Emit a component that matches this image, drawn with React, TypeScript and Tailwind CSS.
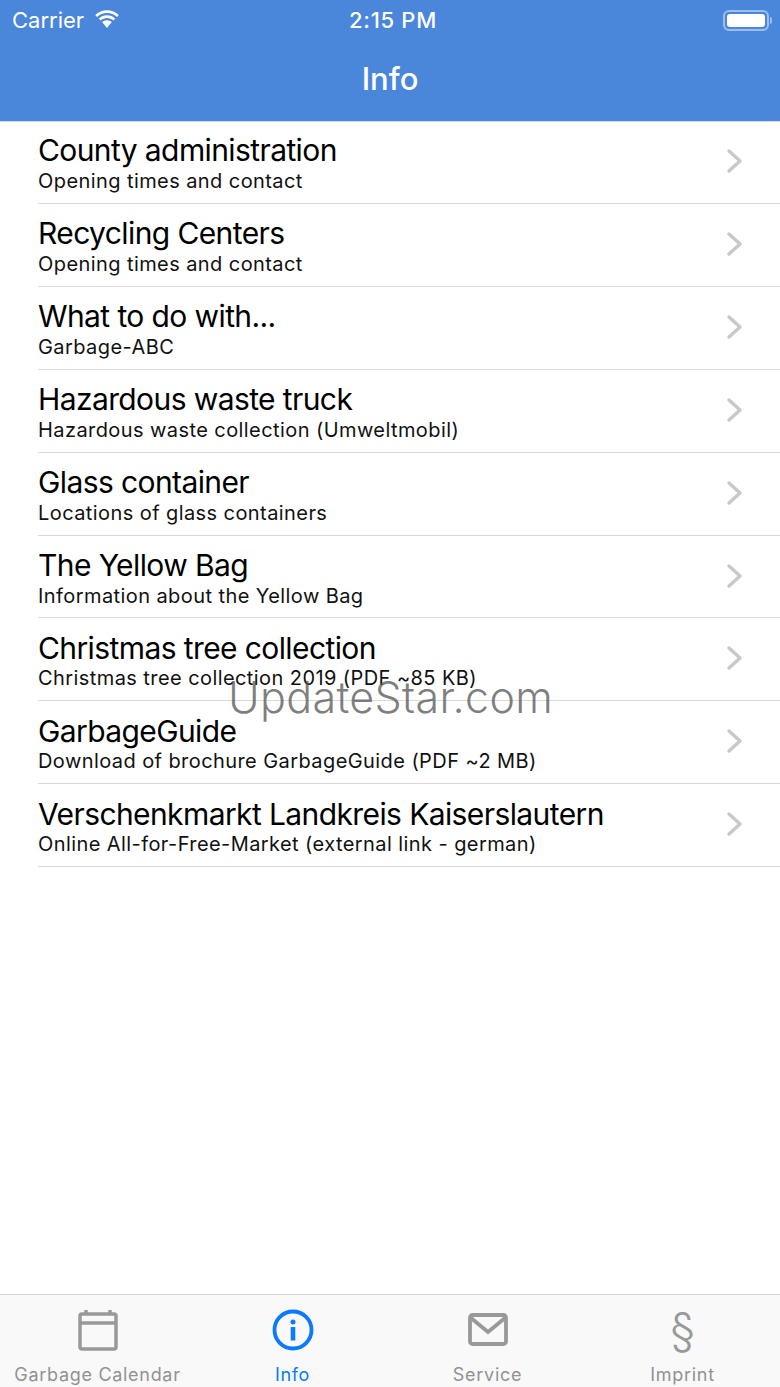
import React from "react";

const rows: [string, string][] = [
  ["County administration", "Opening times and contact"],
  ["Recycling Centers", "Opening times and contact"],
  ["What to do with...", "Garbage-ABC"],
  ["Hazardous waste truck", "Hazardous waste collection (Umweltmobil)"],
  ["Glass container", "Locations of glass containers"],
  ["The Yellow Bag", "Information about the Yellow Bag"],
  ["Christmas tree collection", "Christmas tree collection 2019 (PDF ~85 KB)"],
  ["GarbageGuide", "Download of brochure GarbageGuide (PDF ~2 MB)"],
  ["Verschenkmarkt Landkreis Kaiserslautern", "Online All-for-Free-Market (external link - german)"],
];

function Row({ title, sub }: { title: string; sub: string }) {
  return (
    <div className="h-[82.92px] pl-[38px]">
      <div className="relative h-[82.92px] border-b border-[#d9d9d9]">
        <div className="pt-[11.4px] text-[30px] leading-[36px] tracking-[-0.6px] text-black">{title}</div>
        <div className="mt-[0.6px] text-[20px] leading-[24px] tracking-[0.42px] text-[#111]">{sub}</div>
        <svg className="absolute right-[36px] top-[27px]" width="18" height="26" viewBox="0 0 18 26" fill="none">
          <path d="M3 3 L14 13 L3 23" stroke="#c7c7cc" strokeWidth="3.400" strokeLinecap="round" strokeLinejoin="round" />
        </svg>
      </div>
    </div>
  );
}

function Tab({ label, active, children }: { label: string; active?: boolean; children: React.ReactNode }) {
  return (
    <div className="flex flex-1 flex-col items-center">
      <div className="flex h-[46px] w-full items-center justify-center">{children}</div>
      <div className={`mt-[11px] text-[18px] leading-[22px] tracking-[0.7px] ${active ? "text-[#0a7aff]" : "text-[#929292]"}`}>{label}</div>
    </div>
  );
}

export default function App() {
  return (
    <div className="relative flex h-[1387px] w-[780px] flex-col overflow-hidden bg-white font-['Inter','Liberation_Sans',sans-serif]">
      <header className="relative h-[121px] shrink-0 bg-[#4a86da] text-white shadow-[0_1px_0_#dcdcdc]">
        <div className="relative flex h-[40px] items-center justify-between pl-[12px] pr-[8px]">
          <div className="flex items-center gap-[10px]">
            <span className="text-[22px] leading-[26px]">Carrier</span>
            <svg width="26" height="20" viewBox="0 0 26 20" fill="white">
              <path d="M13 3c3.900 0 7.300 1.500 10 4l1.800-2C21.600 2 17.500.2 13 .2S4.400 2 1.200 5L3 7c2.700-2.500 6.100-4 10-4z" />
              <path d="M13 8c2.500 0 4.700 1 6.400 2.500l1.900-2C19.100 6.400 16.200 5.200 13 5.200S6.900 6.400 4.700 8.500l1.900 2C8.300 9 10.500 8 13 8z" />
              <path d="M13 10.200c-1.900 0-3.500.7-4.800 1.900L13 18l4.800-5.900c-1.300-1.200-2.900-1.900-4.800-1.900z" />
            </svg>
          </div>
          <span className="absolute left-[349px] text-[22px] font-medium leading-[26px] tracking-[0.7px]">2:15 PM</span>
          <div className="flex items-center gap-[1px]">
            <div className="h-[21px] w-[46px] rounded-[6px] border-2 border-[#9dbdec] p-[2px]">
              <div className="h-full w-full rounded-[3px] bg-white" />
            </div>
            <div className="h-[7px] w-[2px] rounded-r-[2px] bg-[#9dbdec]" />
          </div>
        </div>
        <div className="flex h-[80px] items-center justify-center pb-[2px] text-[31px] font-medium leading-[36px]">Info</div>
      </header>

      <main className="flex-1">
        {rows.map(([t, s]) => (
          <Row key={t} title={t} sub={s} />
        ))}
      </main>

      <footer className="flex h-[93px] shrink-0 border-t border-[#d4d4d4] bg-[#f9f9f9] pt-[12px]">
        <Tab label="Garbage Calendar">
          <svg width="40" height="42" viewBox="0 0 40 42" fill="none" stroke="#999999" strokeWidth="3.500">
            <rect x="2" y="5" width="36" height="35" rx="2" />
            <path d="M2 14 H38" />
            <path d="M8 1 V5 M32 1 V5" />
          </svg>
        </Tab>
        <Tab label="Info" active>
          <svg width="42" height="42" viewBox="0 0 42 42" fill="none">
            <circle cx="21" cy="21" r="18.500" stroke="#0a7aff" strokeWidth="3.800" />
            <circle cx="21" cy="13" r="2.500" fill="#0a7aff" />
            <rect x="18.700" y="18" width="4.600" height="13.500" fill="#0a7aff" />
          </svg>
        </Tab>
        <Tab label="Service">
          <svg width="40" height="34" viewBox="0 0 40 34" fill="none" stroke="#999999" strokeWidth="3.800">
            <rect x="2" y="2" width="36" height="29" rx="2.500" />
            <path d="M3 5 L20 19 L37 5" />
          </svg>
        </Tab>
        <Tab label="Imprint">
          <span className="-mt-[2px] text-[46px] font-light leading-[46px] text-[#999999]">§</span>
        </Tab>
      </footer>

      <div className="pointer-events-none absolute left-[228px] top-[671px] text-[43px] font-light leading-[52px] tracking-[0.35px] text-[#555]/75">UpdateStar.com</div>
    </div>
  );
}
